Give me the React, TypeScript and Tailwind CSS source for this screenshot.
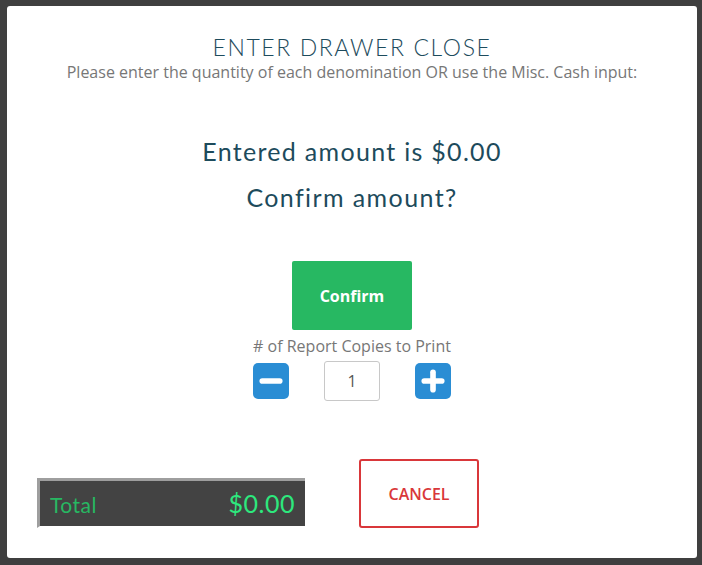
import { Minus, Plus } from "lucide-react";

/* === DRAWER CLOSE MODAL === */
export default function App() {
  return (
    <div className="w-[702px] h-[565px] bg-[#3f3f3f] pt-[6px] pl-[7px] font-['Open_Sans',sans-serif]">
      <div className="w-[690px] h-[552px] bg-white rounded-[3px] flex flex-col items-center">
        {/* Header */}
        <h1 className="mt-[28px] text-[23px] leading-[26px] text-[#1d4b5c] tracking-[1.6px] font-light font-['Lato',sans-serif]">
          ENTER DRAWER CLOSE
        </h1>
        <p className="mt-[1px] text-[16px] leading-[22px] text-[#777]">
          Please enter the quantity of each denomination OR use the Misc. Cash input:
        </p>

        {/* Amount */}
        <p className="mt-[53px] text-[25px] leading-[30px] text-[#1d4b5c] tracking-[1.3px] font-['Lato',sans-serif]">
          Entered amount is $0.00
        </p>
        <p className="mt-[16px] text-[25px] leading-[30px] text-[#1d4b5c] tracking-[1.4px] font-['Lato',sans-serif]">
          Confirm amount?
        </p>

        {/* Confirm */}
        <button className="mt-[49px] w-[120px] h-[69px] bg-[#27b862] rounded-[2px] text-white text-[16px] font-bold">
          Confirm
        </button>

        {/* Copies */}
        <p className="mt-[6px] text-[16px] leading-[20px] text-[#777]">
          # of Report Copies to Print
        </p>
        <div className="mt-[5px] flex items-center">
          <button className="w-[36px] h-[36px] rounded-[5px] bg-[#2a8dd4] flex items-center justify-center">
            <Minus size={30} color="white" strokeWidth={4.5} strokeLinecap="round" />
          </button>
          <div className="ml-[35px] w-[56px] h-[40px] border border-[#c8c8c8] rounded-[3px] flex items-center justify-center text-[16px] text-[#555]">
            1
          </div>
          <button className="ml-[35px] w-[36px] h-[36px] rounded-[5px] bg-[#2a8dd4] flex items-center justify-center">
            <Plus size={30} color="white" strokeWidth={4.5} strokeLinecap="round" />
          </button>
        </div>

        {/* Footer */}
        <div className="mt-[58px] self-start ml-[30px] flex items-end">
          <div className="w-[268px] h-[50px] bg-[#434343] border-t-[3px] border-l-[3px] border-[#9e9e9e] border-b-2 border-b-white flex items-center justify-between px-[10px] font-['Lato',sans-serif]">
            <span className="text-[21px] text-[#27b862] pt-[2px] tracking-[0.5px]">Total</span>
            <span className="text-[25px] text-[#2de87d] tracking-[0.5px]">$0.00</span>
          </div>
          <button className="ml-[54px] w-[120px] h-[69px] border-2 border-[#d9373a] rounded-[3px] text-[#d9373a] text-[16px] font-semibold">
            CANCEL
          </button>
        </div>
      </div>
    </div>
  );
}
